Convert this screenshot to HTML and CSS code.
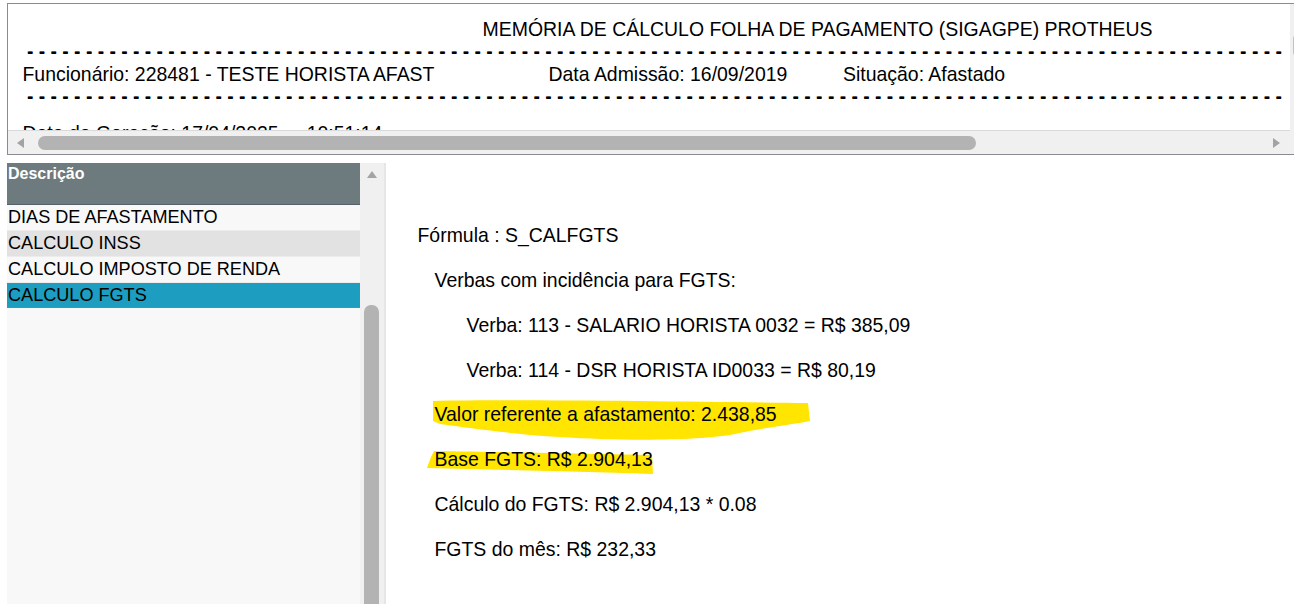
FILE: index.html
```html
<!DOCTYPE html>
<html lang="pt-BR">
<head>
    <meta charset="UTF-8">
    <title>Memória de Cálculo</title>
    <link rel="stylesheet" href="styles.css">
</head>
<body>

    <!-- Cabeçalho do relatório -->
    <div class="report">
        <div class="report-view">
            <div class="report-body">
                <div class="title">MEMÓRIA DE CÁLCULO FOLHA DE PAGAMENTO (SIGAGPE) PROTHEUS</div>
                <div class="dashes">
                    - - - - - - - - - -
                    - - - - - - - - - -
                    - - - - - - - - - -
                    - - - - - - - - - -
                    - - - - - - - - - -
                    - - - - - - - - - -
                    - - - - - - - - - -
                    - - - - - - - - - -
                    - - - - - - - - - -
                    - - - - - - - - - -
                    - - - - - - -
                </div>
                <div class="info-row">
                    <span class="cell-emp">Funcionário: 228481 - TESTE HORISTA AFAST</span>
                    <span class="cell-adm">Data Admissão: 16/09/2019</span>
                    <span>Situação: Afastado</span>
                </div>
                <div class="dashes">
                    - - - - - - - - - -
                    - - - - - - - - - -
                    - - - - - - - - - -
                    - - - - - - - - - -
                    - - - - - - - - - -
                    - - - - - - - - - -
                    - - - - - - - - - -
                    - - - - - - - - - -
                    - - - - - - - - - -
                    - - - - - - - - - -
                    - - - - - - -
                </div>
                <div class="info-row gen-row">Data de Geração: 17/04/2025&nbsp;&nbsp;-&nbsp;&nbsp;10:51:14</div>
            </div>
            <div class="hscroll">
                <span class="arrow-left"></span>
                <span class="hthumb"></span>
                <span class="arrow-right"></span>
            </div>
        </div>
        <div class="vscroll-top"><span class="vthumb-top"></span></div>
    </div>

    <!-- Lista de cálculos e detalhe -->
    <div class="workspace">
        <div class="list">
            <div class="list-head">Descrição</div>
            <div class="list-row">DIAS DE AFASTAMENTO</div>
            <div class="list-row alt">CALCULO INSS</div>
            <div class="list-row">CALCULO IMPOSTO DE RENDA</div>
            <div class="list-row active">CALCULO FGTS</div>
        </div>
        <div class="vscroll-list">
            <span class="arrow-up"></span>
            <span class="vthumb-list"></span>
        </div>
        <div class="content">
            <!-- marcações de marca-texto -->
            <svg class="marker" width="500" height="330" viewBox="0 0 500 330">
                <path d="M47 238 C134 236 314 239 422 240 L424 258 C404 262 374 265 349 271 C314 278 234 278 174 274 C124 271 84 265 54 261 L47 258 Z" fill="#ffe500"/>
                <path d="M48 288 C114 289 214 291 266 292 L267 311 C214 309 114 307 41 305 C43 299 45 293 48 288 Z" fill="#ffe500"/>
            </svg>
            <p>Fórmula : S_CALFGTS</p>
            <p class="indent-1">Verbas com incidência para FGTS:</p>
            <p class="indent-2">Verba: 113 - SALARIO HORISTA 0032 = R$ 385,09</p>
            <p class="indent-2">Verba: 114 - DSR HORISTA ID0033 = R$ 80,19</p>
            <p class="indent-1">Valor referente a afastamento: 2.438,85</p>
            <p class="indent-1">Base FGTS: R$ 2.904,13</p>
            <p class="indent-1">Cálculo do FGTS: R$ 2.904,13 * 0.08</p>
            <p class="indent-1">FGTS do mês: R$ 232,33</p>
        </div>
    </div>

</body>
</html>
```

FILE: styles.css
```css
/* Base */
body {
    margin: 0;
    width: 1294px;
    height: 604px;
    overflow: hidden;
    background-color: #fff;
    color: #000;
    font-family: "Liberation Sans", Arial, sans-serif;
}

/* Cabeçalho do relatório */
.report {
    display: flex;
    box-sizing: border-box;
    width: 1301px;
    height: 152px;
    margin: 3px 0 0 7px;
    border: 1px solid #888b91;
}

.report-view {
    width: 1282px;
    display: flex;
    flex-direction: column;
}

.report-body {
    height: 126px;
    box-sizing: border-box;
    padding-top: 14px;
    overflow: hidden;
    white-space: nowrap;
    font-size: 19.45px;
    line-height: 22.5px;
}

.title {
    padding-left: 474.6px;
}

.dashes {
    padding-left: 19px;
    font-size: 19.3px;
    text-shadow: 0 0.6px 0 #000;
}

.info-row {
    display: flex;
    padding-left: 14.5px;
}

.cell-emp {
    width: 526px;
}

.cell-adm {
    width: 294.5px;
}

.gen-row {
    display: block;
    margin-top: 14px;
}

/* Barra de rolagem horizontal */
.hscroll {
    display: flex;
    align-items: center;
    box-sizing: border-box;
    height: 24px;
    background-color: #f0f0f0;
    border-top: 1px solid #dadada;
}

.arrow-left {
    margin-left: 9px;
    border-top: 5px solid transparent;
    border-bottom: 5px solid transparent;
    border-right: 7px solid #a3a3a3;
}

.hthumb {
    margin-left: 14px;
    width: 938px;
    height: 14px;
    border-radius: 7px;
    background-color: #b3b3b3;
}

.arrow-right {
    margin-left: auto;
    margin-right: 10px;
    border-top: 5px solid transparent;
    border-bottom: 5px solid transparent;
    border-left: 7px solid #a3a3a3;
}

.vscroll-top {
    width: 17px;
    background-color: #f0f0f0;
}

.vthumb-top {
    display: block;
    margin: 29px 0 0 3px;
    width: 12px;
    height: 25px;
    border-radius: 6px;
    background-color: #c1c1c1;
}

/* Área inferior */
.workspace {
    display: flex;
    height: 441px;
    margin: 8px 0 0 7px;
}

.list {
    width: 353px;
    background-color: #f8f8f8;
}

.list-head {
    box-sizing: border-box;
    height: 42px;
    padding: 1.5px 0 0 1px;
    background-color: #6e7b7e;
    border-bottom: 1px solid #56626a;
    color: #fff;
    font-size: 16px;
    font-weight: bold;
    line-height: 18px;
}

.list-row {
    height: 25px;
    padding-left: 1px;
    border-bottom: 1px solid #ececec;
    font-size: 18.1px;
    line-height: 25px;
    white-space: nowrap;
}

.list-row.alt {
    background-color: #e2e2e2;
}

.list-row.active {
    height: 24px;
    background-color: #1d9dbf;
    border-bottom: 1px dotted #e0603a;
}

/* Barra de rolagem da lista */
.vscroll-list {
    display: flex;
    flex-direction: column;
    width: 24px;
    background-color: #f0f0f0;
    border-right: 2px solid #e6e6e6;
}

.arrow-up {
    align-self: center;
    margin-top: 8px;
    border-left: 5px solid transparent;
    border-right: 5px solid transparent;
    border-bottom: 7px solid #a3a3a3;
}

.vthumb-list {
    flex: 1;
    margin: 127px 0 0 4px;
    width: 15px;
    border-radius: 7px 7px 0 0;
    background-color: #b3b3b3;
}

/* Detalhe do cálculo */
.content {
    flex: 1;
    position: relative;
    padding: 61px 0 0 31.5px;
    font-size: 19.45px;
    line-height: 22.5px;
    white-space: nowrap;
}

.marker {
    position: absolute;
    left: 0;
    top: 0;
}

.content p {
    position: relative;
    margin: 0 0 22.35px;
}

.indent-1 {
    padding-left: 17px;
}

.indent-2 {
    padding-left: 49px;
}
```
